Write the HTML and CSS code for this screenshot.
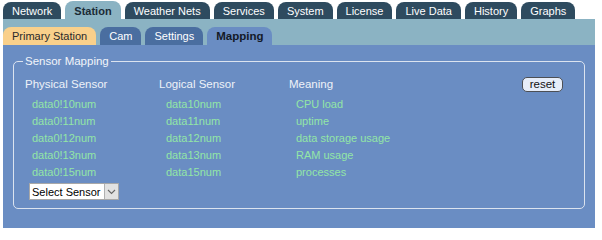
FILE: index.html
```html
<!DOCTYPE html>
<html>
<head>
<meta charset="utf-8">
<link rel="stylesheet" href="styles.css">
</head>
<body>
<div class="app">
  <nav class="tabs">
    <span class="tab">Network</span>
    <span class="tab active">Station</span>
    <span class="tab">Weather Nets</span>
    <span class="tab">Services</span>
    <span class="tab">System</span>
    <span class="tab">License</span>
    <span class="tab">Live Data</span>
    <span class="tab">History</span>
    <span class="tab">Graphs</span>
  </nav>
  <nav class="band">
    <span class="subtab primary">Primary Station</span>
    <span class="subtab">Cam</span>
    <span class="subtab">Settings</span>
    <span class="subtab active">Mapping</span>
  </nav>
  <main class="panel">
    <fieldset class="box">
      <legend class="legend">Sensor Mapping</legend>
      <div class="grid">
        <div class="head">Physical Sensor</div>
        <div class="head">Logical Sensor</div>
        <div class="head">Meaning</div>
        <div class="head btncell"><button class="reset">reset</button></div>

        <div class="val">data0!10num</div><div class="val">data10num</div><div class="val">CPU load</div><div></div>
        <div class="val">data0!11num</div><div class="val">data11num</div><div class="val">uptime</div><div></div>
        <div class="val">data0!12num</div><div class="val">data12num</div><div class="val">data storage usage</div><div></div>
        <div class="val">data0!13num</div><div class="val">data13num</div><div class="val">RAM usage</div><div></div>
        <div class="val">data0!15num</div><div class="val">data15num</div><div class="val">processes</div><div></div>
      </div>
      <div class="selectwrap">
        <select class="select"><option>Select Sensor</option></select>
        <span class="arrow"><svg width="9" height="6" viewBox="0 0 9 6"><path d="M1 1 L4.5 4.5 L8 1" fill="none" stroke="#666" stroke-width="1.1"/></svg></span>
      </div>
    </fieldset>
  </main>
</div>
</body>
</html>
```

FILE: styles.css
```css
html, body {
  margin: 0;
  padding: 0;
  background: #ffffff;
}
body {
  font-family: "Liberation Sans", Arial, sans-serif;
  font-size: 11px;
}
.app {
  margin: 1px 0 0 3px;
  width: 592px;
}
.tabs {
  display: flex;
  align-items: flex-end;
  gap: 4px;
  height: 18px;
}
.tab {
  height: 17px;
  line-height: 18px;
  padding: 0 9px;
  background: #2e4b5f;
  color: #ffffff;
  border-radius: 8px 8px 0 0;
  font-size: 11px;
}
.tab.active {
  height: 18px;
  line-height: 20px;
  background: #8bb3c3;
  color: #1b2b36;
  font-weight: bold;
}
.band {
  background: #8bb3c3;
  padding-top: 8px;
  display: flex;
  gap: 4px;
}
.subtab {
  height: 18px;
  line-height: 19px;
  padding: 0 9px;
  background: #4a6ea0;
  color: #ffffff;
  border-radius: 8px 8px 0 0;
  font-size: 11px;
}
.subtab.primary {
  background: #f9d08b;
  color: #2a2a2a;
}
.subtab.active {
  background: #6a8dc3;
  color: #141a28;
  font-weight: bold;
  font-size: 11.5px;
}
.panel {
  display: block;
  background: #6a8dc3;
  height: 183px;
  box-sizing: border-box;
  padding: 9px 10px 0 10px;
}
.box {
  margin: 0;
  border: 1px solid #dbe3ef;
  border-radius: 5px;
  padding: 8px 10px 8px 9px;
  height: 155px;
  box-sizing: border-box;
}
.legend {
  padding: 0 2px;
  color: #f2f5fa;
  font-size: 11.5px;
  line-height: 14px;
}
.grid {
  display: grid;
  grid-template-columns: 134px 130px 1fr auto;
  grid-template-rows: 20px;
  grid-auto-rows: 17px;
  line-height: 17px;
  padding-left: 2px;
}
.head {
  color: #eef2f8;
  font-size: 11.5px;
}
.val {
  color: #93e6a6;
  padding-left: 7px;
  font-size: 11px;
}
.btncell {
  display: flex;
  align-items: center;
  height: 17px;
}
.reset {
  height: 15px;
  width: 41px;
  margin: 0 11px 0 0;
  padding: 0;
  border: 1px solid #4c4f55;
  border-radius: 5px;
  background: #e6edf9;
  color: #111;
  font-family: "Liberation Sans", Arial, sans-serif;
  font-size: 11.5px;
  line-height: 13px;
}
.selectwrap {
  display: inline-flex;
  margin: 2px 0 0 6px;
  height: 17px;
  box-sizing: border-box;
  border: 1px solid #a8a8a8;
  background: #ffffff;
}
.select {
  appearance: none;
  -webkit-appearance: none;
  border: 0;
  background: #ffffff;
  margin: 0;
  padding: 0 3px 0 2px;
  height: 15px;
  font-family: "Liberation Sans", Arial, sans-serif;
  font-size: 11px;
  color: #000;
  outline: none;
}
.arrow {
  width: 13px;
  height: 15px;
  display: flex;
  align-items: center;
  justify-content: center;
  background: #e2e2e2;
  border-left: 1px solid #b0b0b0;
}
```
